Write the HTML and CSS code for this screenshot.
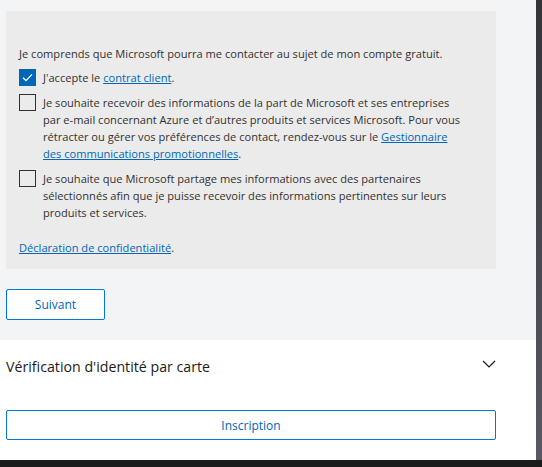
FILE: index.html
```html
<!DOCTYPE html>
<html lang="fr">
<head>
<meta charset="utf-8">
<link rel="stylesheet" href="styles.css">
</head>
<body>
<div class="frame">
  <div class="main">
    <section class="top">
      <div class="panel">
        <p class="intro">Je comprends que Microsoft pourra me contacter au sujet de mon compte gratuit.</p>
        <div class="row">
          <span class="box checked"><svg viewBox="0 0 17 17" width="17" height="17"><path d="M4 8.8 L7 11.6 L13 5.4" fill="none" stroke="#fff" stroke-width="1.3"/></svg></span>
          <span class="label">J'accepte le <a href="#">contrat client</a>.</span>
        </div>
        <div class="row">
          <span class="box"></span>
          <span class="label">Je souhaite recevoir des informations de la part de Microsoft et ses entreprises par e-mail concernant Azure et d’autres produits et services Microsoft. Pour vous rétracter ou gérer vos préférences de contact, rendez-vous sur le <a href="#">Gestionnaire des communications promotionnelles</a>.</span>
        </div>
        <div class="row">
          <span class="box"></span>
          <span class="label">Je souhaite que Microsoft partage mes informations avec des partenaires sélectionnés afin que je puisse recevoir des informations pertinentes sur leurs produits et services.</span>
        </div>
        <p class="privacy"><a href="#">Déclaration de confidentialité</a>.</p>
      </div>
      <button class="btn next">Suivant</button>
    </section>
    <section class="bottom">
      <div class="acc">
        <span class="acc-title">Vérification d'identité par carte</span>
        <svg class="chev" viewBox="0 0 14 8" width="14" height="8"><path d="M1 1 L7 7 L13 1" fill="none" stroke="#1b1b1b" stroke-width="1.2"/></svg>
      </div>
      <button class="btn wide">Inscription</button>
    </section>
  </div>
  <div class="scroll"></div>
</div>
<div class="band"></div>
</body>
</html>
```
FILE: styles.css
```css
html, body { margin: 0; padding: 0; }
body {
  width: 542px;
  height: 467px;
  overflow: hidden;
  font-family: "Open Sans", "Noto Sans", sans-serif;
  color: #323130;
  background: #1b1b1b;
}
.frame { display: flex; height: 460px; }
.main { width: 536px; display: flex; flex-direction: column; }
.scroll { width: 6px; background: linear-gradient(#333338, #595964); }
.band { height: 7px; background: #1b1b1b; }
.top {
  background: #f3f4f6;
  padding: 11px 40px 20px 6px;
}
.panel {
  background: #ebebeb;
  padding: 34px 13px 13px 13px;
  font-size: 11.1px;
  line-height: 17px;
}
.intro { margin: 0 0 7px 0; }
.row { display: flex; gap: 7px; margin-bottom: 8px; }
.box {
  flex: none;
  width: 15px; height: 15px;
  border: 1px solid #323130;
  background: transparent;
}
.box.checked { background: #0067b8; border-color: #0067b8; position: relative; }
.box.checked svg { position: absolute; left: -1px; top: -1px; }
.label { flex: 0 1 418px; }
a { color: #0067b8; text-decoration: underline; }
.privacy { margin: 18px 0 0 0; }
.btn {
  font-family: inherit;
  background: #fff;
  border: 1px solid #0078d4;
  border-radius: 2px;
  color: #0067b8;
  font-size: 12px;
  padding: 0;
  display: block;
}
.next { margin-top: 20px; width: 99px; height: 31px; }
.bottom {
  flex: 1;
  background: #fff;
  padding: 0 40px 0 6px;
}
.acc {
  display: flex;
  align-items: center;
  justify-content: space-between;
  height: 52px;
}
.acc-title { font-size: 14.2px; color: #1b1b1b; }
.chev { margin-top: -4px; }
.wide { margin-top: 18px; width: 490px; height: 30px; border-width: 1.5px; }
```
